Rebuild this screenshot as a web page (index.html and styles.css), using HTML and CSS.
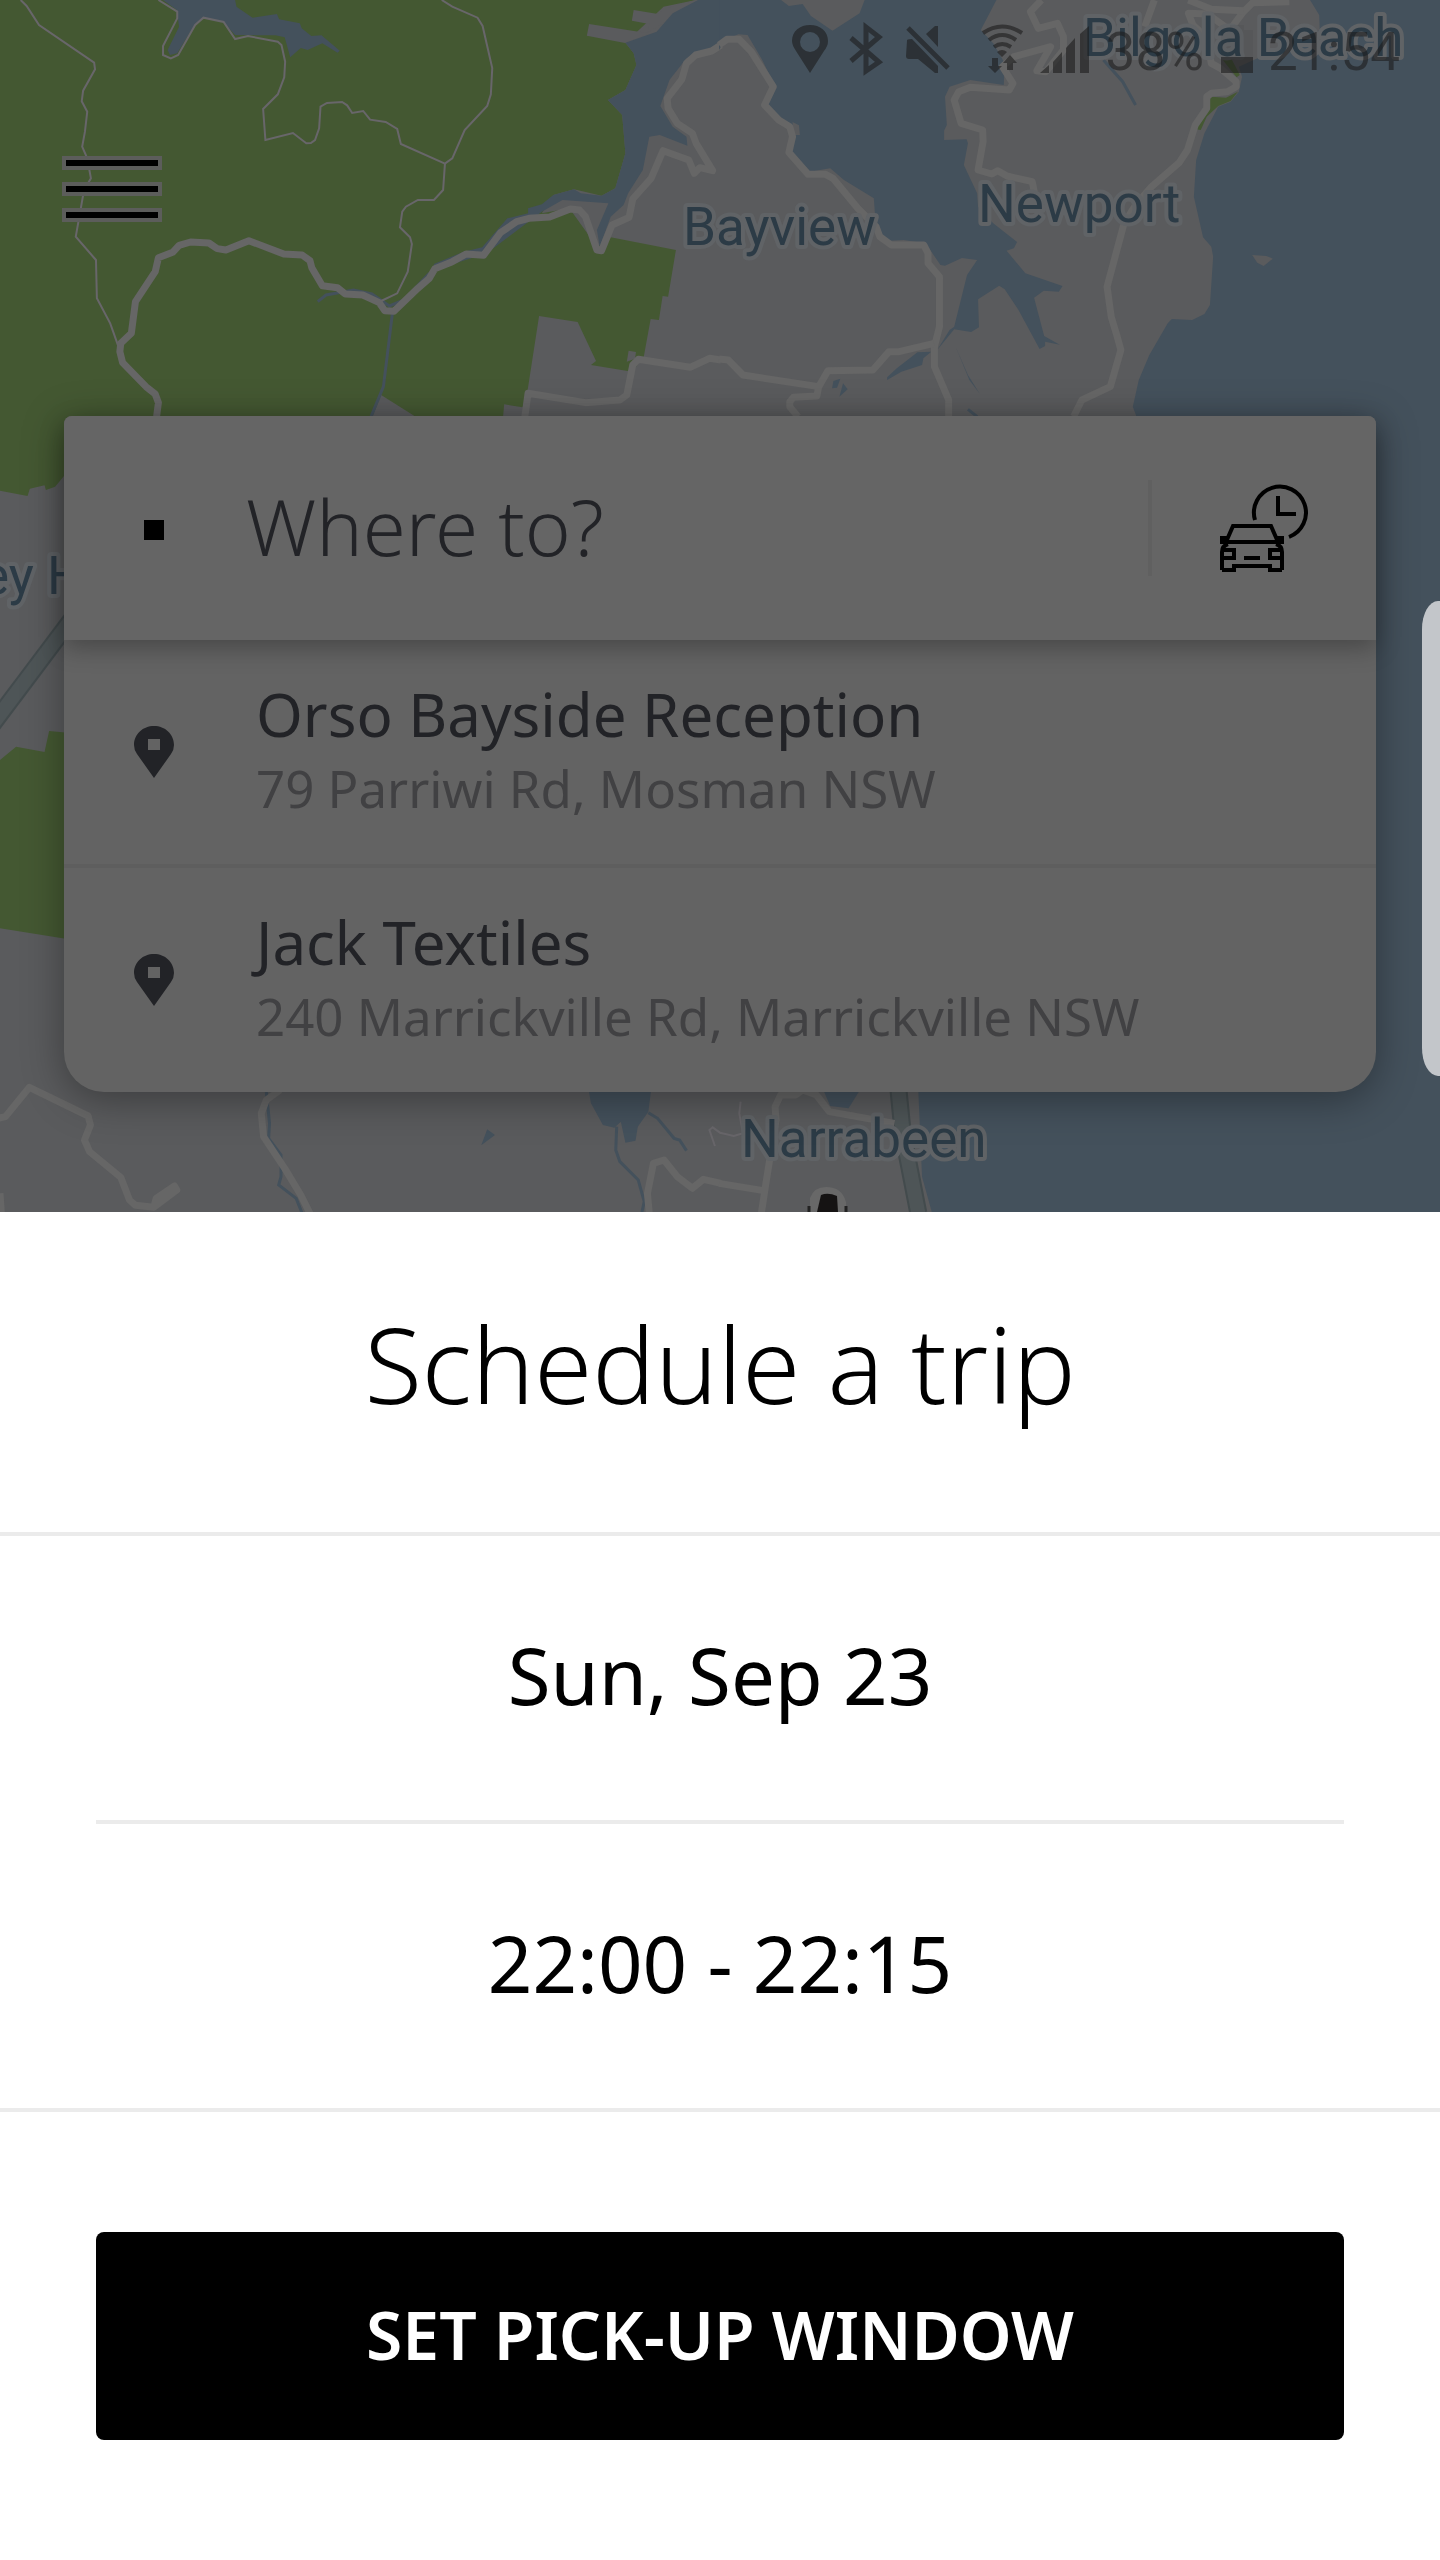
FILE: index.html
```
<!DOCTYPE html>
<html lang="en">
<head>
<meta charset="utf-8">
<meta name="viewport" content="width=device-width, initial-scale=1">
<title>Schedule a trip</title>
<link rel="stylesheet" href="styles.css">
</head>
<body>
<section class="home">
  <svg class="map" viewBox="0 0 1440 1212" preserveAspectRatio="xMidYMin slice" aria-hidden="true">
    <!-- north-west tile -->
    <g transform="scale(.45918 .33333)">
      <path class="park" d="M0 0H1515L1445 20L1362 128L1380 160L1386 195L1362 270L1324 300L1355 345L1362 460L1340 565L1310 587L1250 568L1205 585L1180 640L1240 625L1300 740L1330 712L1472 750L1455 890L1443 888L1435 960L1417 957L1402 1070L1385 1100L1367 1113L1287 1095L1298 1083L1258 966L1174 948L1148 1180L1138 1222L1098 1213L1093 1290L940 1280L830 1185L808 1260H240L120 1460L100 1470L97 1456L65 1466L60 1488L0 1472Z"/>
      <path class="park" d="M0 2280L35 2240L97 2256L107 2193L160 2200V2820L0 2785Z"/>
      <path class="land" d="M1380 30L1433 42L1450 25L1515 0H1530L1410 98L1414 72L1376 62ZM1283 72L1412 100L1364 130L1278 107ZM1369 1052L1385 1056L1383 1076L1365 1085Z"/>
      <path class="water" d="M355 0H512L515 20L550 53L603 42L608 58L653 70L657 85L678 108L700 106L740 152L735 158L702 130L670 150L655 144L632 172L620 112L600 106L512 105L485 65L443 52L425 72L386 160L370 165L365 150L390 80L385 30Z"/>
      <path class="water" d="M1570 0H1520L1465 40L1430 95L1362 128L1380 160L1386 195L1362 270L1324 300L1355 345L1362 460L1340 565L1310 587L1265 580L1250 568L1205 585L1180 613L1150 625V640L1105 655L1050 742L1010 755L945 792V810L1060 760L1180 635L1225 600L1325 610L1300 690L1306 740L1330 650L1358 615L1368 580L1400 510L1414 410L1437 405L1497 437L1495 410L1465 380L1438 318L1458 240L1495 175L1570 130Z"/>
      <path class="creek" d="M692 905L710 885L770 870L810 882L848 918L880 900L935 820M855 935L835 1160L808 1250"/>
      <path class="track" d="M45 0L58 18L85 75L205 188L207 208L181 272L178 304L190 335L185 395L179 440L190 475L198 535L183 570L165 710L209 780L211 895L240 970L258 1040"/>
      <path class="track" d="M345 0L386 35V55L355 138V165L372 175L388 165L425 75L443 53L487 66L512 117L540 108L605 125L613 135L621 185L619 232L605 283L573 327L578 420L638 399L667 430L677 429L686 420L695 385L698 320L712 309L745 306L756 316L767 339L791 333L806 359L840 366L865 387L873 432L969 491L985 475L1012 390L1061 318L1069 283L1072 204L1051 78L1040 53L985 20L962 0"/>
      <path class="track" d="M969 491L965 570L945 600H910L884 620L876 635L871 682L893 712L897 732L888 815L865 880L830 903"/>
      <path class="road" d="M341 1250L345 1208L338 1182L318 1160L267 1088L261 1055L263 1030L286 1000L295 905L338 815L345 773L376 757L390 736L415 726L455 729L473 746L492 750L542 722L618 762L658 765L675 782L679 803L702 857L735 863L752 882L790 885L826 908L838 932L858 934L910 865L935 835L947 806L985 785L1015 762L1053 766L1090 698L1125 665L1152 655L1197 651L1242 627L1262 630L1275 650L1300 750L1310 752L1333 675L1370 652L1378 597L1418 535L1444 452L1500 480L1512 520L1524 503L1552 512L1516 430L1508 400L1475 370L1455 325L1453 295L1485 238L1495 190L1515 165L1550 153L1570 135"/>
      <path class="road" d="M1143 1250L1150 1180L1275 1208L1350 1200L1365 1185L1378 1095L1390 1078L1503 1102L1545 1075L1570 1080"/>
      <path class="rail-edge" d="M-20 2180L170 1832"/>
      <path class="rail" d="M-20 2180L170 1832"/>
    </g>
    <!-- north-east tile -->
    <g transform="translate(720 0) scale(.45918 .33333)">
      <path class="water" d="M-2 0H133L150 18L180 12L198 48L245 92L304 40L315 0H602L568 90L595 130L620 190L618 255L545 240L500 260L490 290L494 375L488 392V420L537 418L540 430L531 495L560 580L562 620L595 670L647 726L640 745L624 752L665 820L746 858L738 875L705 872L684 893L706 1008L740 1034L708 1025V1038L696 1047L650 930L620 868L608 857L562 898L564 982L547 996L510 988L473 1050L500 990L510 980L538 825L560 780L527 774L490 797L480 795L448 730L400 720L370 722L340 690L335 595L270 540L240 505L195 515L150 455L160 400L125 350L100 310L120 260L92 180L60 105L40 103L10 120L-2 150Z"/>
      <path class="water" d="M1285 0L1305 45L1306 90L1130 200L1137 230L1130 275L1112 305L1085 320L1055 400L1037 480L1032 590L1052 712L1070 740L1074 770L1067 915L1055 942L1028 960L984 957L975 970L935 1065L912 1140L899 1220L910 1260L432 2620V3276L440 3530L462 3640H1570V0Z"/>
      <path class="land" d="M1159 765L1190 768L1204 776L1184 798L1170 788ZM158 366L172 376L174 405L160 405Z"/>
      <path class="water" d="M460 1055L430 1057L385 1105L364 1132V1140L395 1115L440 1095L443 1075ZM262 1136L247 1143L244 1165L255 1163ZM268 1150L260 1190L278 1168ZM514 1043L540 1125L566 1182L543 1140Z"/>
      <path class="creek" d="M835 180L877 245L905 315M540 1228L560 1250"/>
      <path class="park" d="M1036 388L1070 290L1102 293L1128 275L1112 303L1085 318L1060 350L1047 390ZM1090 140L1115 180L1132 225L1125 232L1095 180Z"/>
      <path class="road" d="M-2 135L15 118H42L68 155L116 260L97 315L128 360L152 380L158 410L150 457L192 523H230L246 535L300 625L340 680L348 710L373 735H444L453 760V790L478 830V980L467 1040V1100L498 1200V1250"/>
      <path class="road" d="M-2 1077L18 1080L50 1125L215 1160L235 1112L333 1110L368 1055H390L466 1030M215 1160L211 1188L160 1192L152 1205V1220L170 1250"/>
      <path class="road" d="M770 1250L788 1200L850 1160L873 1050L865 1010L852 950L843 860L880 670L905 615L940 560L1000 488L1018 450L1035 375L1060 325V290L1070 280L1105 275L1124 260V245L1090 205L1070 190L1058 110L1030 75L1020 40L1062 42L1110 90L1140 35L1160 8L1240 5"/>
      <path class="road" d="M1020 0L1070 28L1140 32M946 0L925 80M700 0L676 35L693 85L735 70L748 110V150L710 215L690 212L720 140L640 170L615 200L638 250L630 270L545 262L520 275L510 300L525 370L572 390L573 425L562 510L592 522L605 512L625 528L680 545L685 580"/>
    </g>
    <!-- south-west tile -->
    <g transform="translate(0 800) scale(.45918 .33333)">
      <path class="water" d="M1282 870L1287 910L1313 975L1338 983L1352 965L1362 1028L1384 1022L1389 980L1412 935L1418 870ZM1061 988L1078 1005L1048 1036Z"/>
      <path class="creek" d="M580 876L587 970L585 1015L612 1065V1130L607 1155L645 1195L658 1240M1343 980L1341 1050L1350 1085L1390 1140L1403 1205L1398 1236M1412 938L1432 955L1468 1015L1480 1020L1495 1052"/>
      <path class="road" d="M-5 955L12 950L64 862L125 903L192 948L197 975L184 1020L195 1055L263 1132L282 1200L295 1216L335 1222L385 1170L380 1158L340 1195L335 1222M610 870L580 900L569 940L574 1010L620 1105L655 1185L675 1240"/>
      <path class="road" d="M1414 1240L1410 1180L1423 1090L1446 1080L1475 1130L1508 1165L1532 1138L1570 1150M0 1180L3 1240"/>
      <path class="track" d="M1557 1038L1545 990L1552 982L1570 1000"/>
    </g>
    <!-- south-east tile -->
    <g transform="translate(720 800) scale(.45918 .33333)">
      <path class="water" d="M225 870H305L280 925L240 918Z"/>
      <path class="rail-edge" d="M388 860L398 1000L432 1240"/>
      <path class="rail" d="M388 860L398 1000L432 1240"/>
      <path class="road" d="M90 1240L100 1150L122 960L120 920L132 885L165 885L180 870L210 885L238 935L380 970M-2 1150L95 1172"/>
      <path class="track" d="M45 905L42 940L50 1000L30 1008L0 998"/>
    </g>
    <g class="labels">
      <text x="1083" y="56">Bilgola Beach</text>
      <text x="683" y="245">Bayview</text>
      <text x="978" y="222">Newport</text>
      <text x="-19" y="594">ey H</text>
      <text x="741" y="1157">Narrabeen</text>
    </g>
    <path d="M810 1212V1198Q814 1187 826 1187Q842 1187 846 1202V1212Z" fill="#686868"/>
    <path d="M817 1212L821 1195Q828 1192 837 1196L838 1212Z" fill="#151313"/>
    <path d="M809 1206V1212M846 1206V1212" stroke="#222" stroke-width="3"/>
  </svg>

  <header class="status">
    <svg width="55" height="56" viewBox="785 20 55 56"><path fill-rule="evenodd" d="M811 73L797 51Q793 45 793 41C793 31 801 25 811 25S829 31 829 41Q829 46 825 51ZM811 32a10 10 0 1 0 0 20a10 10 0 1 0 0-20Z"/></svg>
    <svg width="55" height="56" viewBox="840 20 55 56"><path d="M852 38L880 62L867 71V27L880 37L852 61" fill="none" stroke="currentColor" stroke-width="5"/></svg>
    <svg width="70" height="56" viewBox="895 20 70 56"><path d="M927 34L936 26H939V47ZM908 41Q907 39 913 39L939 66V73H936L919 59H910Q907 59 907 56Z"/><path d="M909 28L949 68" stroke="currentColor" stroke-width="5"/></svg>
    <svg width="68" height="56" viewBox="965 20 68 56"><path d="M984 33Q1003 20 1023 33M990 40Q1003 30 1017 40M995 47Q1003 41 1012 47" fill="none" stroke="currentColor" stroke-width="4"/><path d="M998 52Q1003 48 1008 52L1003 57ZM993 58H999V66H1003L996 73L989 66H993ZM1008 70V63H1004L1011 55L1018 63H1014V70Z"/></svg>
    <svg width="74" height="56" viewBox="1033 20 74 56"><path d="M1041 73L1050 65V73ZM1054 62L1063 52V73H1054ZM1067 48L1076 38V73H1067ZM1081 34L1090 26V73H1081Z"/></svg>
    <span>38%</span>
    <svg width="64" height="56" viewBox="1203 20 64 56"><path d="M1220 57H1252V73H1220Z"/><path d="M1220 30H1229V25H1243V30H1252V57H1220Z" opacity=".1"/></svg>
    <span>21:54</span>
  </header>

  <button class="menu" type="button" aria-label="Menu"><i></i><i></i><i></i></button>

  <main class="search">
    <div class="where">
      <span class="dot"></span>
      <input class="where-input" type="text" placeholder="Where to?" aria-label="Where to?">
      <button class="later" type="button" aria-label="Schedule a ride">
        <svg width="88" height="88" viewBox="0 0 88 88" fill="none" stroke="#000" stroke-width="4">
          <path d="M35 36A26 26 0 1 1 69 53M58 12V30H76"/>
          <path d="M6 58L13 42H51L58 58ZM2 86V68Q2 62 8 60M62 86V68Q62 62 56 60M2 66H14V74H2M62 66H50V74H62M2 86H14V82H50V86H62M24 74H40"/>
          <path d="M0 52H9V60H0ZM55 52H64V60H55Z" fill="#000" stroke="none"/>
        </svg>
      </button>
    </div>
    <a class="place" href="#orso">
      <svg width="40" height="52" viewBox="0 0 40 52"><path fill-rule="evenodd" d="M20 52L3 28Q0 24 0 19C0 8 9 0 20 0S40 8 40 19Q40 24 37 28ZM14 13V24H26V13Z"/></svg>
      <span class="place-text"><span class="name">Orso Bayside Reception</span><span class="address">79 Parriwi Rd, Mosman NSW</span></span>
    </a>
    <a class="place" href="#jack">
      <svg width="40" height="52" viewBox="0 0 40 52"><path fill-rule="evenodd" d="M20 52L3 28Q0 24 0 19C0 8 9 0 20 0S40 8 40 19Q40 24 37 28ZM14 13V24H26V13Z"/></svg>
      <span class="place-text"><span class="name">Jack Textiles</span><span class="address">240 Marrickville Rd, Marrickville NSW</span></span>
    </a>
  </main>
</section>

<section class="sheet">
  <h1>Schedule a trip</h1>
  <div class="fields">
    <button class="field" type="button">Sun, Sep 23</button>
    <button class="field" type="button">22:00 - 22:15</button>
  </div>
  <div class="action"><button class="confirm" type="button">SET PICK-UP WINDOW</button></div>
</section>
<div class="edge-handle"></div>
</body>
</html>
```
FILE: styles.css
```
* { box-sizing: border-box; }

body {
  position: relative;
  margin: 0;
  min-height: 100vh;
  background: #fff;
  color: #000;
  font-family: "Noto Sans", "Open Sans", sans-serif;
  overflow-x: hidden;
}

button, input {
  margin: 0;
  padding: 0;
  border: 0;
  background: none;
  color: inherit;
  font: inherit;
}

/* Dimmed home screen */
.home {
  position: relative;
  padding: 20px 64px 120px;
  background: #5a5b5d;
  overflow: hidden;
}

.map {
  position: absolute;
  inset: 0;
  width: 100%;
  height: 100%;
}

.map path { vector-effect: non-scaling-stroke; }
.park { fill: #445832; }
.water { fill: #44515c; }
.land { fill: #5a5b5d; }
.creek { fill: none; stroke: #44515c; stroke-width: 3; }
.track { fill: none; stroke: #68666a; stroke-width: 2; }
.road { fill: none; stroke: #666; stroke-width: 7; stroke-linejoin: round; }
.rail-edge { fill: none; stroke: #434b4d; stroke-width: 18; }
.rail { fill: none; stroke: #4e5557; stroke-width: 14; }

.labels {
  fill: #2c3b46;
  stroke: #606366;
  stroke-width: 8px;
  stroke-linejoin: round;
  paint-order: stroke;
  font-family: Roboto, sans-serif;
  font-size: 53px;
}

.status {
  position: relative;
  display: flex;
  justify-content: flex-end;
  align-items: center;
  height: 56px;
  margin-right: -24px;
  color: rgba(29, 29, 29, .6);
  font-family: Roboto, sans-serif;
  font-size: 53px;
  line-height: 56px;
}

.status svg { flex: none; fill: currentColor; }
.status span { padding-top: 8px; }

.menu {
  position: relative;
  display: flex;
  flex-direction: column;
  gap: 12px;
  margin: 80px 0 0 -2px;
}

.menu i {
  width: 100px;
  height: 14px;
  border: 4px solid #5c5d5b;
  background: #000;
}

.search {
  position: relative;
  margin-top: 194px;
  border-radius: 8px 8px 40px 40px;
  background: #636363;
  box-shadow: 0 8px 40px rgba(0, 0, 0, .35);
}

.where {
  position: relative;
  display: flex;
  align-items: center;
  height: 224px;
  padding: 0 68px 0 80px;
  border-radius: 8px 8px 0 0;
  background: #656565;
  box-shadow: 0 8px 24px rgba(0, 0, 0, .28);
}

.dot {
  flex: none;
  width: 20px;
  height: 20px;
  margin-top: 4px;
  background: #000;
}

.where-input {
  flex: 1;
  min-width: 0;
  height: 112px;
  margin-left: 82px;
  padding-bottom: 4px;
  color: #222327;
  font-size: 78px;
  font-weight: 300;
}

.where-input::placeholder { color: #222327; opacity: 1; }

.later {
  display: flex;
  align-items: center;
  height: 96px;
  padding-left: 68px;
  border-left: 4px solid #606060;
}

.place {
  display: flex;
  align-items: center;
  gap: 82px;
  height: 224px;
  padding-left: 70px;
  color: #222327;
  text-decoration: none;
}

.place + .place { border-top: 4px solid #5e5e5e; height: 228px; }
.place svg { flex: none; fill: #222327; }
.place-text { display: flex; flex-direction: column; padding-bottom: 4px; }
.name { font-size: 60px; line-height: 76px; }
.address { color: #414143; font-size: 51px; line-height: 72px; }

/* Scheduling sheet */
.sheet { background: #fff; text-align: center; }

h1 {
  margin: 0;
  padding: 80px 0 96px;
  border-bottom: 4px solid #ebebeb;
  font-size: 105px;
  font-weight: 300;
  line-height: 144px;
}

.fields {
  padding: 0 96px;
  border-bottom: 4px solid #ebebeb;
}

.field {
  display: block;
  width: 100%;
  height: 284px;
  padding-bottom: 6px;
  font-size: 78px;
}

.field + .field { border-top: 4px solid #ebebeb; height: 288px; }

.action { padding: 120px 96px; }

.confirm {
  width: 100%;
  height: 208px;
  padding-bottom: 4px;
  border-radius: 8px;
  background: #000;
  color: #fff;
  font-size: 66px;
  font-weight: 600;
}

/* System edge panel handle, above both layers */
.edge-handle {
  position: absolute;
  top: 601px;
  right: 0;
  width: 18px;
  height: 475px;
  border-radius: 16px 0 0 16px / 28px 0 0 28px;
  background: #c3c6ca;
}
```
